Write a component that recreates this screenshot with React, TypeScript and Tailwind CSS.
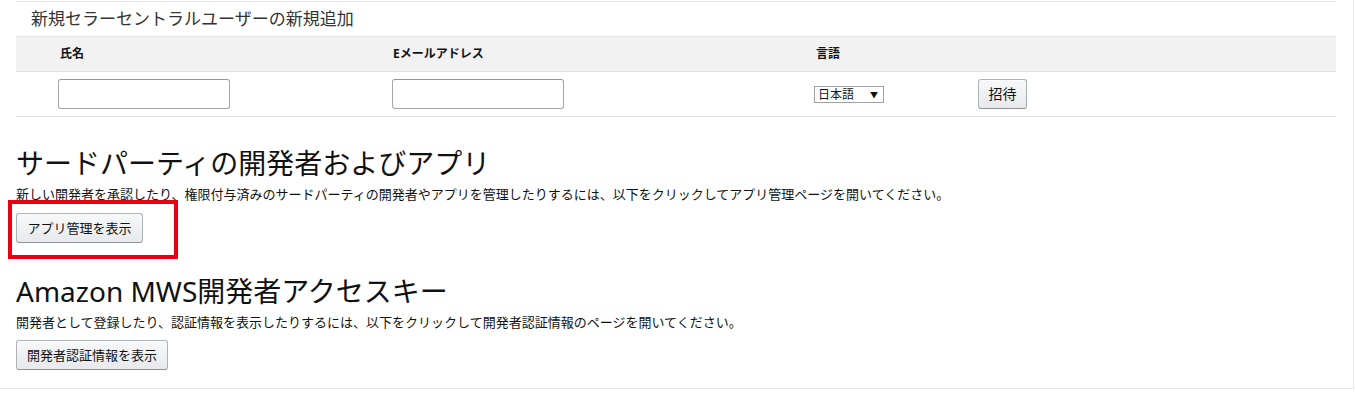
const FONT = "font-['Noto_Sans','Noto_Sans_CJK_JP',sans-serif]";

function GrayButton({ label, className = '' }: { label: string; className?: string }) {
  return (
    <button
      type="button"
      className={`h-[30px] rounded-[3px] border border-[#adb1b8] border-b-[#8d9096] bg-gradient-to-b from-[#f7f8fa] to-[#e7e9ec] text-[13px] leading-none text-[#111] shadow-[inset_0_1px_0_rgba(255,255,255,0.6)] ${className}`}
    >
      {label}
    </button>
  );
}

function TextInput() {
  return (
    <input
      type="text"
      className="h-[30px] w-[172px] rounded-[3px] border border-[#a6a6a6] border-t-[#949494] bg-white px-2 text-[13px] outline-none"
    />
  );
}

// ── New user invite table ─────────────────────────────────────────────────────

function InviteSection() {
  return (
    <div className="border-t border-[#e7e7e7]">
      <div className="h-[34px] pl-[15px] text-[17px] leading-[34px] text-[#333]">
        新規セラーセントラルユーザーの新規追加
      </div>

      {/* Header row */}
      <div className="grid h-[36px] grid-cols-[42px_334px_422px_164px_1fr] items-center border-y border-[#e3e3e3] bg-[#f2f2f2] text-[12px] font-bold text-[#111]">
        <div />
        <div className="pl-[2px]">氏名</div>
        <div className="pl-[1px]">Eメールアドレス</div>
        <div className="pl-[2px]">言語</div>
        <div />
      </div>

      {/* Input row */}
      <div className="grid h-[45px] grid-cols-[42px_334px_422px_164px_1fr] items-center border-b border-[#e3e3e3]">
        <div />
        <div><TextInput /></div>
        <div><TextInput /></div>
        <div>
          <div className="mt-[1px] flex h-[17px] w-[70px] items-center justify-between border border-[#a0a0a0] bg-white pl-[3px] pr-[5px] text-[12px] leading-none text-[#111]">
            <span>日本語</span>
            <span className="text-[8px]">▼</span>
          </div>
        </div>
        <div>
          <GrayButton label="招待" className="w-[49px] text-[14px]" />
        </div>
      </div>
    </div>
  );
}

// ── App ──────────────────────────────────────────────────────────────────────

export default function App() {
  return (
    <div className={`${FONT} h-[400px] bg-white text-[#111]`}>
      <div className="w-[1354px] border-r border-b border-[#e7e7e7] pt-px pl-4 pr-[17px] pb-[18px]">
        <InviteSection />

        <h2 className="mt-[28px] text-[28px] font-normal leading-[36px] text-[#111]">
          サードパーティの開発者およびアプリ
        </h2>
        <p className="mt-[4px] text-[13px] leading-[18px]">
          新しい開発者を承認したり、権限付与済みのサードパーティの開発者やアプリを管理したりするには、以下をクリックしてアプリ管理ページを開いてください。
        </p>
        <div className="relative mt-[10px] w-fit">
          <GrayButton label="アプリ管理を表示" className="w-[127px]" />
          {/* annotation box */}
          <div className="pointer-events-none absolute -top-[13px] -left-[8px] h-[59px] w-[170px] border-4 border-[#e60012]" />
        </div>

        <h2 className="mt-[30px] text-[28px] font-normal leading-[36px] text-[#111]">
          Amazon MWS開発者アクセスキー
        </h2>
        <p className="mt-[4px] text-[13px] leading-[18px]">
          開発者として登録したり、認証情報を表示したりするには、以下をクリックして開発者認証情報のページを開いてください。
        </p>
        <GrayButton label="開発者認証情報を表示" className="mt-[9px] w-[152px]" />
      </div>
    </div>
  );
}
